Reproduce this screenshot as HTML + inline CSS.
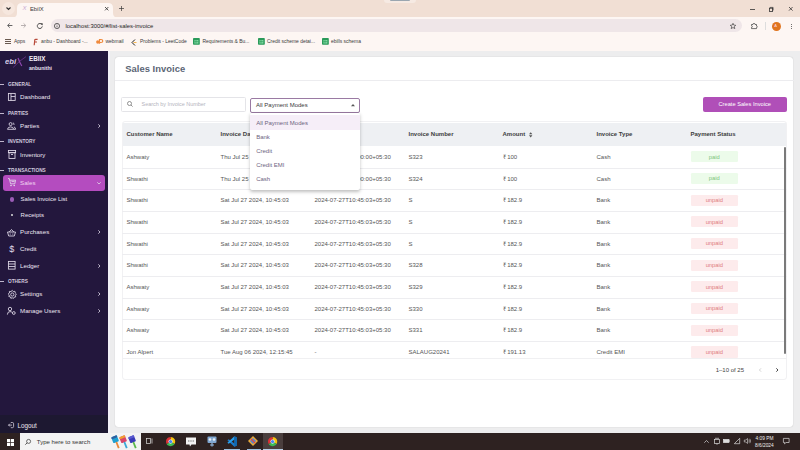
<!DOCTYPE html>
<html><head><meta charset="utf-8"><style>
*{box-sizing:border-box;margin:0;padding:0}
html,body{width:800px;height:450px;overflow:hidden;font-family:"Liberation Sans",sans-serif;background:#fff;position:relative}
.abs{position:absolute}
.t{position:absolute;white-space:nowrap}
svg{position:absolute;overflow:visible}
</style></head><body>
<div class="abs" style="left:0px;top:0px;width:800px;height:17px;background:#f1dfd4"></div>
<svg style="left:12px;top:2.5px" width="110" height="14.5" viewBox="0 0 110 14.5"><path d="M0 14.5 Q5 14.5 5 10 L5 5 Q5 0 10 0 L96 0 Q101 0 101 5 L101 10 Q101 14.5 106 14.5 Z" fill="#fdf6f3"/></svg>
<div class="abs" style="left:2px;top:2px;width:13px;height:13px;background:#f6e7de;border-radius:50%"></div>
<svg style="left:5.5px;top:6.5px" width="5" height="3" viewBox="0 0 5 3"><path d="M0.5 0.5 L2.5 2.5 L4.5 0.5" stroke="#333" stroke-width="1.1" fill="none"/></svg>
<div class="t" style="left:22.5px;top:3.30px;height:10px;line-height:10px;font-size:6px;color:#c8a8d0;font-weight:normal;"><i>X</i></div>
<div class="t" style="left:30px;top:3.50px;height:10px;line-height:10px;font-size:5.8px;color:#3a3a3a;font-weight:normal;">EbilX</div>
<svg style="left:104.8px;top:6.6px" width="3.4" height="3.4" viewBox="0 0 3.4 3.4"><path d="M0 0 L3.4 3.4 M3.4 0 L0 3.4" stroke="#3a3a3a" stroke-width="0.85"/></svg>
<svg style="left:119px;top:6px" width="5" height="5" viewBox="0 0 5 5"><path d="M2.5 0 V5 M0 2.5 H5" stroke="#3a3a3a" stroke-width="0.7"/></svg>
<svg style="left:750px;top:8.5px" width="5" height="1" viewBox="0 0 5 1"><path d="M0 0.5 H5" stroke="#333" stroke-width="0.8"/></svg>
<svg style="left:769px;top:6.5px" width="4.5" height="4.5" viewBox="0 0 4.5 4.5"><rect x="0.4" y="1.2" width="3.2" height="3.2" stroke="#333" stroke-width="0.8" fill="none"/><path d="M1.2 1.2 V0.4 H4.1 V3.3 H3.6" stroke="#333" stroke-width="0.7" fill="none"/></svg>
<svg style="left:788.8px;top:6.7px" width="3.6" height="3.6" viewBox="0 0 3.6 3.6"><path d="M0 0 L3.6 3.6 M3.6 0 L0 3.6" stroke="#333" stroke-width="0.8"/></svg>
<div class="abs" style="left:0px;top:17px;width:800px;height:18px;background:#fdf6f3"></div>
<div class="abs" style="left:50.5px;top:19.3px;width:691px;height:13.2px;background:#efe6e8;border-radius:6.6px"></div>
<svg style="left:7px;top:23.3px" width="5.4" height="5" viewBox="0 0 5.4 5"><path d="M5.4 2.5 H0.8 M2.8 0.4 L0.6 2.5 L2.8 4.6" stroke="#555" stroke-width="0.9" fill="none"/></svg>
<svg style="left:21.2px;top:23.3px" width="5.4" height="5" viewBox="0 0 5.4 5"><path d="M0 2.5 H4.6 M2.6 0.4 L4.8 2.5 L2.6 4.6" stroke="#b0a8a8" stroke-width="0.9" fill="none"/></svg>
<svg style="left:36.5px;top:23px" width="6" height="6" viewBox="0 0 6 6"><path d="M4.9 1.6 A2.5 2.5 0 1 0 5.3 3.4" stroke="#444" stroke-width="0.95" fill="none"/><path d="M3.3 0.2 L5.7 0.2 L5.7 2.6 Z" fill="#444"/></svg>
<svg style="left:54px;top:23px" width="6" height="6" viewBox="0 0 6 6"><circle cx="3" cy="3" r="2.6" stroke="#444" stroke-width="0.8" fill="none"/><path d="M3 2.5 V4.3" stroke="#444" stroke-width="0.7"/><circle cx="3" cy="1.6" r="0.35" fill="#444"/></svg>
<div class="t" style="left:65.5px;top:21.20px;height:10px;line-height:10px;font-size:5.9px;color:#1f1f1f;font-weight:normal;">localhost:3000/#/list-sales-invoice</div>
<svg style="left:729.5px;top:23px" width="6" height="6" viewBox="0 0 6 6"><path d="M3 0.3 L3.8 2.1 L5.8 2.3 L4.3 3.6 L4.8 5.6 L3 4.5 L1.2 5.6 L1.7 3.6 L0.2 2.3 L2.2 2.1 Z" stroke="#444" stroke-width="0.7" fill="none" stroke-linejoin="round"/></svg>
<svg style="left:750.5px;top:23px" width="6.5" height="6" viewBox="0 0 6.5 6"><path d="M0.5 1.5 H2 Q2 0.3 3 0.3 Q4 0.3 4 1.5 H5.5 V3 Q6.3 3 6.3 3.8 Q6.3 4.6 5.5 4.6 V5.6 H0.5 V4.5 Q1.3 4.5 1.3 3.6 Q1.3 2.7 0.5 2.7 Z" stroke="#444" stroke-width="0.75" fill="none"/></svg>
<div class="abs" style="left:764.5px;top:22px;width:0.6px;height:8px;background:#ddd"></div>
<div class="abs" style="left:771.5px;top:21.5px;width:9px;height:9px;background:#e0741e;border-radius:50%"></div>
<div class="t" style="left:774.3px;top:21.00px;height:10px;line-height:10px;font-size:4px;color:#fde;font-weight:normal;">A</div>
<div class="abs" style="left:790.5px;top:23.5px;width:1.2px;height:1.2px;background:#444;border-radius:50%"></div>
<div class="abs" style="left:790.5px;top:25.8px;width:1.2px;height:1.2px;background:#444;border-radius:50%"></div>
<div class="abs" style="left:790.5px;top:28.1px;width:1.2px;height:1.2px;background:#444;border-radius:50%"></div>
<div class="abs" style="left:0px;top:35px;width:800px;height:16px;background:#fdf6f3"></div>
<div class="abs" style="left:0px;top:50.5px;width:800px;height:0.8px;background:#e8dcd8"></div>
<div class="abs" style="left:5.0px;top:38.8px;width:1.6px;height:1.3px;background:#6a5a50"></div>
<div class="abs" style="left:5.0px;top:40.9px;width:1.6px;height:1.3px;background:#6a5a50"></div>
<div class="abs" style="left:5.0px;top:43.0px;width:1.6px;height:1.3px;background:#6a5a50"></div>
<div class="abs" style="left:7.2px;top:38.8px;width:1.6px;height:1.3px;background:#6a5a50"></div>
<div class="abs" style="left:7.2px;top:40.9px;width:1.6px;height:1.3px;background:#6a5a50"></div>
<div class="abs" style="left:7.2px;top:43.0px;width:1.6px;height:1.3px;background:#6a5a50"></div>
<div class="abs" style="left:9.4px;top:38.8px;width:1.6px;height:1.3px;background:#6a5a50"></div>
<div class="abs" style="left:9.4px;top:40.9px;width:1.6px;height:1.3px;background:#6a5a50"></div>
<div class="abs" style="left:9.4px;top:43.0px;width:1.6px;height:1.3px;background:#6a5a50"></div>
<div class="t" style="left:14px;top:37.40px;height:10px;line-height:10px;font-size:4.95px;color:#3a3a3a;font-weight:normal;">Apps</div>
<svg style="left:33px;top:38.5px" width="5" height="6.5" viewBox="0 0 5 6.5"><path d="M1.2 6.3 L1.8 0.8 Q2 0.3 2.6 0.3 H4.6 M1.5 3 H4" stroke="#b84a3a" stroke-width="1.2" fill="none"/></svg>
<div class="t" style="left:41px;top:37.40px;height:10px;line-height:10px;font-size:4.95px;color:#3a3a3a;font-weight:normal;">anbu - Dashboard -...</div>
<svg style="left:96px;top:39.3px" width="7" height="5" viewBox="0 0 7 5"><circle cx="1.8" cy="3" r="1.7" fill="#f08a3c"/><path d="M3.5 4.8 V0.5 H5 Q6.8 0.5 6.8 2 Q6.8 3.5 5 3.5 H3.5" stroke="#f08a3c" stroke-width="1.2" fill="none"/></svg>
<div class="t" style="left:105.5px;top:37.40px;height:10px;line-height:10px;font-size:4.95px;color:#3a3a3a;font-weight:normal;">webmail</div>
<svg style="left:131px;top:38.5px" width="6" height="7" viewBox="0 0 6 7"><path d="M4 0.5 L1 3.5 L4 6.5" stroke="#222" stroke-width="1" fill="none"/><path d="M2.5 3.5 H5.5" stroke="#f5a623" stroke-width="0.8"/></svg>
<div class="t" style="left:140px;top:37.40px;height:10px;line-height:10px;font-size:4.95px;color:#3a3a3a;font-weight:normal;">Problems - LeetCode</div>
<svg style="left:193px;top:38.2px" width="6.8" height="6.8" viewBox="0 0 6.8 6.8"><rect x="0" y="0" width="6.8" height="6.8" rx="0.8" fill="#2a9a5a"/><rect x="1.4" y="2" width="4" height="3.6" fill="#7fd8a0"/><path d="M1.4 3.6 H5.4 M3 2 V5.6" stroke="#2a9a5a" stroke-width="0.6"/></svg>
<svg style="left:257.5px;top:38.2px" width="6.8" height="6.8" viewBox="0 0 6.8 6.8"><rect x="0" y="0" width="6.8" height="6.8" rx="0.8" fill="#2a9a5a"/><rect x="1.4" y="2" width="4" height="3.6" fill="#7fd8a0"/><path d="M1.4 3.6 H5.4 M3 2 V5.6" stroke="#2a9a5a" stroke-width="0.6"/></svg>
<svg style="left:321.5px;top:38.2px" width="6.8" height="6.8" viewBox="0 0 6.8 6.8"><rect x="0" y="0" width="6.8" height="6.8" rx="0.8" fill="#2a9a5a"/><rect x="1.4" y="2" width="4" height="3.6" fill="#7fd8a0"/><path d="M1.4 3.6 H5.4 M3 2 V5.6" stroke="#2a9a5a" stroke-width="0.6"/></svg>
<div class="t" style="left:202.5px;top:37.40px;height:10px;line-height:10px;font-size:4.95px;color:#3a3a3a;font-weight:normal;">Requirements &amp; Bu...</div>
<div class="t" style="left:267px;top:37.40px;height:10px;line-height:10px;font-size:4.95px;color:#3a3a3a;font-weight:normal;">Credit scheme detai...</div>
<div class="t" style="left:331px;top:37.40px;height:10px;line-height:10px;font-size:4.95px;color:#3a3a3a;font-weight:normal;">ebills schema</div>
<div class="abs" style="left:384px;top:0px;width:32px;height:3.2px;background:rgba(255,255,255,0.35);border-radius:0 0 6px 6px"></div>
<div class="abs" style="left:390.3px;top:0px;width:19.5px;height:1.1px;background:#9aa6b0;border-radius:0 0 1px 1px"></div>
<div class="abs" style="left:0px;top:51.3px;width:108px;height:381.7px;background:#23173d"></div>
<div class="abs" style="left:0px;top:415px;width:108px;height:18px;background:#1d1831"></div>
<div class="abs" style="left:108px;top:51.3px;width:692px;height:381.7px;background:#ededee"></div>
<div class="abs" style="left:108px;top:51.3px;width:1.6px;height:381.7px;background:#f3f1f8"></div>
<div class="abs" style="left:114.7px;top:56.8px;width:678.8px;height:370px;background:#fff;border-radius:3px;box-shadow:0 0 1px rgba(0,0,0,0.28)"></div>
<div class="t" style="left:29px;top:53.60px;height:10px;line-height:10px;font-size:6.3px;color:#f4eef8;font-weight:bold;">EBIIX</div>
<div class="t" style="left:29px;top:62.80px;height:10px;line-height:10px;font-size:5.1px;color:#e8e0f0;font-weight:bold;">anbunithi</div>
<div class="t" style="left:4.6px;top:57.40px;height:10px;line-height:10px;font-size:7px;color:#d6cce8;font-weight:bold;transform:scaleX(1.1);transform-origin:0 50%"><i>ebi</i></div>
<svg style="left:0px;top:0px" width="30" height="70" viewBox="0 0 30 70"><path d="M18 58 Q19.5 62 21.8 66" stroke="#8e48b0" stroke-width="1.2" fill="none"/><path d="M26 56.6 Q19 61 13.2 67.4" stroke="#7a3a9c" stroke-width="0.7" fill="none"/></svg>
<div class="abs" style="left:0px;top:84.1px;width:3.6px;height:0.8px;background:#bfb6cc"></div>
<div class="t" style="left:8px;top:80.10px;height:10px;line-height:10px;font-size:4.75px;color:#d2cade;font-weight:bold;">GENERAL</div>
<div class="abs" style="left:0px;top:113.0px;width:3.6px;height:0.8px;background:#bfb6cc"></div>
<div class="t" style="left:8px;top:109.00px;height:10px;line-height:10px;font-size:4.75px;color:#d2cade;font-weight:bold;">PARTIES</div>
<div class="abs" style="left:0px;top:141.0px;width:3.6px;height:0.8px;background:#bfb6cc"></div>
<div class="t" style="left:8px;top:137.00px;height:10px;line-height:10px;font-size:4.75px;color:#d2cade;font-weight:bold;">INVENTORY</div>
<div class="abs" style="left:0px;top:169.6px;width:3.6px;height:0.8px;background:#bfb6cc"></div>
<div class="t" style="left:8px;top:165.60px;height:10px;line-height:10px;font-size:4.75px;color:#d2cade;font-weight:bold;">TRANSACTIONS</div>
<div class="abs" style="left:0px;top:280.6px;width:3.6px;height:0.8px;background:#bfb6cc"></div>
<div class="t" style="left:8px;top:276.60px;height:10px;line-height:10px;font-size:4.75px;color:#d2cade;font-weight:bold;">OTHERS</div>
<div class="abs" style="left:3px;top:174.5px;width:102px;height:16px;background:#b44cbf;border-radius:3px"></div>
<svg style="left:8px;top:93.2px" width="7.6" height="7.8" viewBox="0 0 7.6 7.8"><rect x="0.4" y="0.4" width="6.8" height="7" stroke="#e2dcea" stroke-width="0.85" fill="none"/><path d="M3 0.4 V7.4 M3 3.5 H7.2" stroke="#e2dcea" stroke-width="0.85" fill="none"/></svg>
<svg style="left:7px;top:121.8px" width="9" height="7.8" viewBox="0 0 9 7.8"><circle cx="3.6" cy="2.1" r="1.5" stroke="#e2dcea" stroke-width="0.85" fill="none"/><path d="M0.5 7.3 Q0.8 4.9 3.6 4.9 Q6.4 4.9 6.7 7.3 Z" stroke="#e2dcea" stroke-width="0.85" fill="none"/><path d="M5.9 0.7 Q7.3 1.2 7 2.9 M6.9 4.9 Q8.5 5.2 8.6 7.3 H6.7" stroke="#e2dcea" stroke-width="0.85" fill="none"/></svg>
<svg style="left:7.5px;top:150px" width="8" height="9" viewBox="0 0 8 9"><rect x="0.4" y="0.5" width="7.2" height="2.2" stroke="#e2dcea" stroke-width="0.85" fill="none"/><rect x="1" y="2.7" width="6" height="5.8" stroke="#e2dcea" stroke-width="0.85" fill="none"/><path d="M3 4.5 H5" stroke="#e2dcea" stroke-width="0.85" fill="none"/></svg>
<svg style="left:8px;top:178px" width="8" height="9" viewBox="0 0 8 9"><path d="M0 0.6 H1.3 L2.6 5.8 H6.8 L7.6 2.2 H2" stroke="#e2dcea" stroke-width="0.85" fill="none"/><circle cx="3" cy="7.5" r="0.8" fill="#e2dcea"/><circle cx="6.2" cy="7.5" r="0.8" fill="#e2dcea"/><path d="M3.5 3.6 H6.6" stroke="#e2dcea" stroke-width="0.85" fill="none"/></svg>
<svg style="left:7px;top:228.5px" width="9" height="7.5" viewBox="0 0 9 7.5"><path d="M0.5 3 H8.5 L7.3 7 H1.7 Z" stroke="#e2dcea" stroke-width="0.85" fill="none"/><path d="M2.2 3 L4.5 0.5 L6.8 3" stroke="#e2dcea" stroke-width="0.85" fill="none"/><path d="M3.2 4.5 V5.6 M5.8 4.5 V5.6" stroke="#e2dcea" stroke-width="0.85" fill="none"/></svg>
<div class="t" style="left:9.2px;top:243.60px;height:10px;line-height:10px;font-size:9px;color:#e2dcea;font-weight:normal;">$</div>
<svg style="left:8px;top:261px" width="7.5" height="8.5" viewBox="0 0 7.5 8.5"><rect x="0.4" y="0.4" width="6.7" height="7.7" stroke="#e2dcea" stroke-width="0.85" fill="none"/><path d="M0.4 3 H7.1 M0.4 5.5 H7.1" stroke="#e2dcea" stroke-width="0.85" fill="none"/></svg>
<svg style="left:7.5px;top:290px" width="8.6" height="9" viewBox="0 0 8.6 9"><path d="M4.3 0.4 L5.3 1.6 L6.9 1.3 L7.2 2.9 L8.4 4 L7.4 5.3 L7.7 6.9 L6.1 7.2 L5.2 8.6 L4.3 7.6 L2.9 8.4 L2.4 6.9 L0.8 6.5 L1.3 5 L0.2 3.9 L1.5 3 L1.4 1.4 L3 1.6 Z" stroke="#e2dcea" stroke-width="0.85" fill="none" stroke-linejoin="round"/><circle cx="4.3" cy="4.5" r="1.6" stroke="#e2dcea" stroke-width="0.85" fill="none"/></svg>
<svg style="left:7px;top:307px" width="9" height="8" viewBox="0 0 9 8"><circle cx="3" cy="2" r="1.7" stroke="#e2dcea" stroke-width="0.85" fill="none"/><path d="M0.4 7.6 Q0.4 4.6 3 4.6 Q4.4 4.6 5 5.4" stroke="#e2dcea" stroke-width="0.85" fill="none"/><circle cx="6.8" cy="6" r="1.4" stroke="#e2dcea" stroke-width="0.85" fill="none"/></svg>
<div class="t" style="left:20px;top:92.00px;height:10px;line-height:10px;font-size:6.2px;color:#ece6f2;font-weight:normal;">Dashboard</div>
<div class="t" style="left:20px;top:121.40px;height:10px;line-height:10px;font-size:6.2px;color:#ece6f2;font-weight:normal;">Parties</div>
<svg style="left:98px;top:124.4px" width="2.4" height="4" viewBox="0 0 2.4 4"><path d="M0.3 0.3 L2 2 L0.3 3.7" stroke="#e2dcea" stroke-width="0.8" fill="none"/></svg>
<div class="t" style="left:20px;top:149.60px;height:10px;line-height:10px;font-size:6.2px;color:#ece6f2;font-weight:normal;">Inventory</div>
<div class="t" style="left:20px;top:177.80px;height:10px;line-height:10px;font-size:6.2px;color:#f0d6f2;font-weight:normal;">Sales</div>
<div class="t" style="left:20px;top:226.80px;height:10px;line-height:10px;font-size:6.2px;color:#ece6f2;font-weight:normal;">Purchases</div>
<svg style="left:98px;top:229.8px" width="2.4" height="4" viewBox="0 0 2.4 4"><path d="M0.3 0.3 L2 2 L0.3 3.7" stroke="#e2dcea" stroke-width="0.8" fill="none"/></svg>
<div class="t" style="left:20px;top:243.80px;height:10px;line-height:10px;font-size:6.2px;color:#ece6f2;font-weight:normal;">Credit</div>
<div class="t" style="left:20px;top:260.60px;height:10px;line-height:10px;font-size:6.2px;color:#ece6f2;font-weight:normal;">Ledger</div>
<svg style="left:98px;top:263.6px" width="2.4" height="4" viewBox="0 0 2.4 4"><path d="M0.3 0.3 L2 2 L0.3 3.7" stroke="#e2dcea" stroke-width="0.8" fill="none"/></svg>
<div class="t" style="left:20px;top:289.40px;height:10px;line-height:10px;font-size:6.2px;color:#ece6f2;font-weight:normal;">Settings</div>
<svg style="left:98px;top:292.4px" width="2.4" height="4" viewBox="0 0 2.4 4"><path d="M0.3 0.3 L2 2 L0.3 3.7" stroke="#e2dcea" stroke-width="0.8" fill="none"/></svg>
<div class="t" style="left:20px;top:306.00px;height:10px;line-height:10px;font-size:6.2px;color:#ece6f2;font-weight:normal;">Manage Users</div>
<svg style="left:98px;top:309px" width="2.4" height="4" viewBox="0 0 2.4 4"><path d="M0.3 0.3 L2 2 L0.3 3.7" stroke="#e2dcea" stroke-width="0.8" fill="none"/></svg>
<svg style="left:97.3px;top:182px" width="4" height="2.4" viewBox="0 0 4 2.4"><path d="M0.3 0.3 L2 2 L3.7 0.3" stroke="#e2dcea" stroke-width="0.8" fill="none"/></svg>
<div class="abs" style="left:9.8px;top:197.2px;width:4.6px;height:4.6px;background:#9a5cb6;border-radius:50%"></div>
<div class="t" style="left:20.6px;top:194.40px;height:10px;line-height:10px;font-size:6px;color:#ece6f2;font-weight:normal;">Sales Invoice List</div>
<div class="abs" style="left:11.2px;top:214px;width:2.2px;height:2.2px;background:#ddd;border-radius:50%"></div>
<div class="t" style="left:20.6px;top:210.00px;height:10px;line-height:10px;font-size:6px;color:#ece6f2;font-weight:normal;">Receipts</div>
<svg style="left:8px;top:422.3px" width="6" height="6.2" viewBox="0 0 6 6.2"><path d="M2.8 0.5 H4.4 Q5.6 0.5 5.6 1.7 V4.5 Q5.6 5.7 4.4 5.7 H2.8" stroke="#e2dcea" stroke-width="0.75" fill="none"/><path d="M4 3.1 H0.5 M1.9 1.7 L0.5 3.1 L1.9 4.5" stroke="#e2dcea" stroke-width="0.75" fill="none"/></svg>
<div class="t" style="left:17.5px;top:421.20px;height:10px;line-height:10px;font-size:6.3px;color:#ece6f2;font-weight:normal;">Logout</div>
<div class="t" style="left:125.2px;top:64.00px;height:10px;line-height:10px;font-size:9.4px;color:#5b6575;font-weight:bold;letter-spacing:0.05px">Sales Invoice</div>
<div class="abs" style="left:115px;top:80px;width:678.5px;height:1px;background:#ececef"></div>
<div class="abs" style="left:121.1px;top:97px;width:125.4px;height:14.6px;border:1px solid #e4e4e8;border-radius:1.5px;background:#fff"></div>
<svg style="left:126.8px;top:101px" width="6" height="6" viewBox="0 0 6 6"><circle cx="2.5" cy="2.5" r="2" stroke="#777" stroke-width="0.8" fill="none"/><path d="M4 4 L5.6 5.6" stroke="#777" stroke-width="0.8"/></svg>
<div class="t" style="left:141.6px;top:98.60px;height:10px;line-height:10px;font-size:5.45px;color:#b4b4bc;font-weight:normal;">Search by Invoice Number</div>
<div class="abs" style="left:249.8px;top:97.5px;width:110.5px;height:15px;border:1px solid #9a7aa3;border-radius:2px;background:#fff"></div>
<div class="t" style="left:256px;top:100.20px;height:10px;line-height:10px;font-size:6px;color:#3a3a3a;font-weight:normal;">All Payment Modes</div>
<svg style="left:350.5px;top:103.8px" width="4" height="2.2" viewBox="0 0 4 2.2"><path d="M0 2.2 L2 0 L4 2.2 Z" fill="#555"/></svg>
<div class="abs" style="left:703px;top:97px;width:83.5px;height:14.5px;background:#b04fb8;border-radius:2px"></div>
<div class="t" style="left:718.5px;top:99.30px;height:10px;line-height:10px;font-size:5.7px;color:#fff;font-weight:normal;">Create Sales Invoice</div>
<div class="abs" style="left:121.5px;top:120.5px;width:665.5px;height:259.5px;border:1px solid #f1f1f3;border-radius:3px"></div>
<div class="abs" style="left:122.5px;top:122.6px;width:663.5px;height:23.8px;background:#eef0f3"></div>
<div class="t" style="left:126.5px;top:129.20px;height:10px;line-height:10px;font-size:6px;color:#3d3d3d;font-weight:bold;">Customer Name</div>
<div class="t" style="left:220.5px;top:129.20px;height:10px;line-height:10px;font-size:6px;color:#3d3d3d;font-weight:bold;">Invoice Date</div>
<div class="t" style="left:314.5px;top:129.20px;height:10px;line-height:10px;font-size:6px;color:#3d3d3d;font-weight:bold;">Due Date</div>
<div class="t" style="left:408.5px;top:129.20px;height:10px;line-height:10px;font-size:6px;color:#3d3d3d;font-weight:bold;">Invoice Number</div>
<div class="t" style="left:502.5px;top:129.20px;height:10px;line-height:10px;font-size:6px;color:#3d3d3d;font-weight:bold;">Amount</div>
<div class="t" style="left:596.5px;top:129.20px;height:10px;line-height:10px;font-size:6px;color:#3d3d3d;font-weight:bold;">Invoice Type</div>
<div class="t" style="left:690.5px;top:129.20px;height:10px;line-height:10px;font-size:6px;color:#3d3d3d;font-weight:bold;">Payment Status</div>
<svg style="left:528.6px;top:131.6px" width="3.4" height="5.6" viewBox="0 0 3.4 5.6"><path d="M0 2.3 L1.7 0.2 L3.4 2.3 Z M0 3.3 L1.7 5.4 L3.4 3.3 Z" fill="#555"/></svg>
<div class="t" style="left:126.5px;top:151.90px;height:10px;line-height:10px;font-size:6px;color:#555;font-weight:normal;">Ashwaty</div>
<div class="t" style="left:220.5px;top:151.90px;height:10px;line-height:10px;font-size:6px;color:#555;font-weight:normal;">Thu Jul 25 2024, 10:00:00</div>
<div class="t" style="left:314.5px;top:151.90px;height:10px;line-height:10px;font-size:6px;color:#555;font-weight:normal;">2024-07-25T10:00:00+05:30</div>
<div class="t" style="left:408.5px;top:151.90px;height:10px;line-height:10px;font-size:6px;color:#555;font-weight:normal;">S323</div>
<div class="t" style="left:502.5px;top:151.90px;height:10px;line-height:10px;font-size:6px;color:#555;font-weight:normal;">&#x20B9; 100</div>
<div class="t" style="left:596.5px;top:151.90px;height:10px;line-height:10px;font-size:6px;color:#555;font-weight:normal;">Cash</div>
<div class="abs" style="left:690.6px;top:151.20000000000002px;width:47.5px;height:11.2px;background:#ecfbea;border-radius:1.2px"></div>
<div class="t" style="left:690.6px;top:151.50px;height:10px;line-height:10px;font-size:5.8px;color:#7cc47a;font-weight:normal;"><span style='display:inline-block;width:47.5px;text-align:center'>paid</span></div>
<div class="abs" style="left:122.0px;top:167.65px;width:664.5px;height:1px;background:#ededf0"></div>
<div class="t" style="left:126.5px;top:173.58px;height:10px;line-height:10px;font-size:6px;color:#555;font-weight:normal;">Shwathi</div>
<div class="t" style="left:220.5px;top:173.58px;height:10px;line-height:10px;font-size:6px;color:#555;font-weight:normal;">Thu Jul 25 2024, 10:00:00</div>
<div class="t" style="left:314.5px;top:173.58px;height:10px;line-height:10px;font-size:6px;color:#555;font-weight:normal;">2024-07-25T10:00:00+05:30</div>
<div class="t" style="left:408.5px;top:173.58px;height:10px;line-height:10px;font-size:6px;color:#555;font-weight:normal;">S324</div>
<div class="t" style="left:502.5px;top:173.58px;height:10px;line-height:10px;font-size:6px;color:#555;font-weight:normal;">&#x20B9; 100</div>
<div class="t" style="left:596.5px;top:173.58px;height:10px;line-height:10px;font-size:6px;color:#555;font-weight:normal;">Cash</div>
<div class="abs" style="left:690.6px;top:172.88000000000002px;width:47.5px;height:11.2px;background:#ecfbea;border-radius:1.2px"></div>
<div class="t" style="left:690.6px;top:173.18px;height:10px;line-height:10px;font-size:5.8px;color:#7cc47a;font-weight:normal;"><span style='display:inline-block;width:47.5px;text-align:center'>paid</span></div>
<div class="abs" style="left:122.0px;top:189.29999999999998px;width:664.5px;height:1px;background:#ededf0"></div>
<div class="t" style="left:126.5px;top:195.26px;height:10px;line-height:10px;font-size:6px;color:#555;font-weight:normal;">Shwathi</div>
<div class="t" style="left:220.5px;top:195.26px;height:10px;line-height:10px;font-size:6px;color:#555;font-weight:normal;">Sat Jul 27 2024, 10:45:03</div>
<div class="t" style="left:314.5px;top:195.26px;height:10px;line-height:10px;font-size:6px;color:#555;font-weight:normal;">2024-07-27T10:45:03+05:30</div>
<div class="t" style="left:408.5px;top:195.26px;height:10px;line-height:10px;font-size:6px;color:#555;font-weight:normal;">S</div>
<div class="t" style="left:502.5px;top:195.26px;height:10px;line-height:10px;font-size:6px;color:#555;font-weight:normal;">&#x20B9; 182.9</div>
<div class="t" style="left:596.5px;top:195.26px;height:10px;line-height:10px;font-size:6px;color:#555;font-weight:normal;">Bank</div>
<div class="abs" style="left:690.6px;top:194.56px;width:47.5px;height:11.2px;background:#fdebec;border-radius:1.2px"></div>
<div class="t" style="left:690.6px;top:194.86px;height:10px;line-height:10px;font-size:5.8px;color:#e07c7c;font-weight:normal;"><span style='display:inline-block;width:47.5px;text-align:center'>unpaid</span></div>
<div class="abs" style="left:122.0px;top:210.95px;width:664.5px;height:1px;background:#ededf0"></div>
<div class="t" style="left:126.5px;top:216.94px;height:10px;line-height:10px;font-size:6px;color:#555;font-weight:normal;">Shwathi</div>
<div class="t" style="left:220.5px;top:216.94px;height:10px;line-height:10px;font-size:6px;color:#555;font-weight:normal;">Sat Jul 27 2024, 10:45:03</div>
<div class="t" style="left:314.5px;top:216.94px;height:10px;line-height:10px;font-size:6px;color:#555;font-weight:normal;">2024-07-27T10:45:03+05:30</div>
<div class="t" style="left:408.5px;top:216.94px;height:10px;line-height:10px;font-size:6px;color:#555;font-weight:normal;">S</div>
<div class="t" style="left:502.5px;top:216.94px;height:10px;line-height:10px;font-size:6px;color:#555;font-weight:normal;">&#x20B9; 182.9</div>
<div class="t" style="left:596.5px;top:216.94px;height:10px;line-height:10px;font-size:6px;color:#555;font-weight:normal;">Bank</div>
<div class="abs" style="left:690.6px;top:216.24px;width:47.5px;height:11.2px;background:#fdebec;border-radius:1.2px"></div>
<div class="t" style="left:690.6px;top:216.54px;height:10px;line-height:10px;font-size:5.8px;color:#e07c7c;font-weight:normal;"><span style='display:inline-block;width:47.5px;text-align:center'>unpaid</span></div>
<div class="abs" style="left:122.0px;top:232.6px;width:664.5px;height:1px;background:#ededf0"></div>
<div class="t" style="left:126.5px;top:238.62px;height:10px;line-height:10px;font-size:6px;color:#555;font-weight:normal;">Shwathi</div>
<div class="t" style="left:220.5px;top:238.62px;height:10px;line-height:10px;font-size:6px;color:#555;font-weight:normal;">Sat Jul 27 2024, 10:45:03</div>
<div class="t" style="left:314.5px;top:238.62px;height:10px;line-height:10px;font-size:6px;color:#555;font-weight:normal;">2024-07-27T10:45:03+05:30</div>
<div class="t" style="left:408.5px;top:238.62px;height:10px;line-height:10px;font-size:6px;color:#555;font-weight:normal;">S</div>
<div class="t" style="left:502.5px;top:238.62px;height:10px;line-height:10px;font-size:6px;color:#555;font-weight:normal;">&#x20B9; 182.9</div>
<div class="t" style="left:596.5px;top:238.62px;height:10px;line-height:10px;font-size:6px;color:#555;font-weight:normal;">Bank</div>
<div class="abs" style="left:690.6px;top:237.92000000000002px;width:47.5px;height:11.2px;background:#fdebec;border-radius:1.2px"></div>
<div class="t" style="left:690.6px;top:238.22px;height:10px;line-height:10px;font-size:5.8px;color:#e07c7c;font-weight:normal;"><span style='display:inline-block;width:47.5px;text-align:center'>unpaid</span></div>
<div class="abs" style="left:122.0px;top:254.25px;width:664.5px;height:1px;background:#ededf0"></div>
<div class="t" style="left:126.5px;top:260.30px;height:10px;line-height:10px;font-size:6px;color:#555;font-weight:normal;">Shwathi</div>
<div class="t" style="left:220.5px;top:260.30px;height:10px;line-height:10px;font-size:6px;color:#555;font-weight:normal;">Sat Jul 27 2024, 10:45:03</div>
<div class="t" style="left:314.5px;top:260.30px;height:10px;line-height:10px;font-size:6px;color:#555;font-weight:normal;">2024-07-27T10:45:03+05:30</div>
<div class="t" style="left:408.5px;top:260.30px;height:10px;line-height:10px;font-size:6px;color:#555;font-weight:normal;">S328</div>
<div class="t" style="left:502.5px;top:260.30px;height:10px;line-height:10px;font-size:6px;color:#555;font-weight:normal;">&#x20B9; 182.9</div>
<div class="t" style="left:596.5px;top:260.30px;height:10px;line-height:10px;font-size:6px;color:#555;font-weight:normal;">Bank</div>
<div class="abs" style="left:690.6px;top:259.6px;width:47.5px;height:11.2px;background:#fdebec;border-radius:1.2px"></div>
<div class="t" style="left:690.6px;top:259.90px;height:10px;line-height:10px;font-size:5.8px;color:#e07c7c;font-weight:normal;"><span style='display:inline-block;width:47.5px;text-align:center'>unpaid</span></div>
<div class="abs" style="left:122.0px;top:275.9px;width:664.5px;height:1px;background:#ededf0"></div>
<div class="t" style="left:126.5px;top:281.98px;height:10px;line-height:10px;font-size:6px;color:#555;font-weight:normal;">Ashwaty</div>
<div class="t" style="left:220.5px;top:281.98px;height:10px;line-height:10px;font-size:6px;color:#555;font-weight:normal;">Sat Jul 27 2024, 10:45:03</div>
<div class="t" style="left:314.5px;top:281.98px;height:10px;line-height:10px;font-size:6px;color:#555;font-weight:normal;">2024-07-27T10:45:03+05:30</div>
<div class="t" style="left:408.5px;top:281.98px;height:10px;line-height:10px;font-size:6px;color:#555;font-weight:normal;">S329</div>
<div class="t" style="left:502.5px;top:281.98px;height:10px;line-height:10px;font-size:6px;color:#555;font-weight:normal;">&#x20B9; 182.9</div>
<div class="t" style="left:596.5px;top:281.98px;height:10px;line-height:10px;font-size:6px;color:#555;font-weight:normal;">Bank</div>
<div class="abs" style="left:690.6px;top:281.28000000000003px;width:47.5px;height:11.2px;background:#fdebec;border-radius:1.2px"></div>
<div class="t" style="left:690.6px;top:281.58px;height:10px;line-height:10px;font-size:5.8px;color:#e07c7c;font-weight:normal;"><span style='display:inline-block;width:47.5px;text-align:center'>unpaid</span></div>
<div class="abs" style="left:122.0px;top:297.55px;width:664.5px;height:1px;background:#ededf0"></div>
<div class="t" style="left:126.5px;top:303.66px;height:10px;line-height:10px;font-size:6px;color:#555;font-weight:normal;">Ashwaty</div>
<div class="t" style="left:220.5px;top:303.66px;height:10px;line-height:10px;font-size:6px;color:#555;font-weight:normal;">Sat Jul 27 2024, 10:45:03</div>
<div class="t" style="left:314.5px;top:303.66px;height:10px;line-height:10px;font-size:6px;color:#555;font-weight:normal;">2024-07-27T10:45:03+05:30</div>
<div class="t" style="left:408.5px;top:303.66px;height:10px;line-height:10px;font-size:6px;color:#555;font-weight:normal;">S330</div>
<div class="t" style="left:502.5px;top:303.66px;height:10px;line-height:10px;font-size:6px;color:#555;font-weight:normal;">&#x20B9; 182.9</div>
<div class="t" style="left:596.5px;top:303.66px;height:10px;line-height:10px;font-size:6px;color:#555;font-weight:normal;">Bank</div>
<div class="abs" style="left:690.6px;top:302.96px;width:47.5px;height:11.2px;background:#fdebec;border-radius:1.2px"></div>
<div class="t" style="left:690.6px;top:303.26px;height:10px;line-height:10px;font-size:5.8px;color:#e07c7c;font-weight:normal;"><span style='display:inline-block;width:47.5px;text-align:center'>unpaid</span></div>
<div class="abs" style="left:122.0px;top:319.20000000000005px;width:664.5px;height:1px;background:#ededf0"></div>
<div class="t" style="left:126.5px;top:325.34px;height:10px;line-height:10px;font-size:6px;color:#555;font-weight:normal;">Ashwaty</div>
<div class="t" style="left:220.5px;top:325.34px;height:10px;line-height:10px;font-size:6px;color:#555;font-weight:normal;">Sat Jul 27 2024, 10:45:03</div>
<div class="t" style="left:314.5px;top:325.34px;height:10px;line-height:10px;font-size:6px;color:#555;font-weight:normal;">2024-07-27T10:45:03+05:30</div>
<div class="t" style="left:408.5px;top:325.34px;height:10px;line-height:10px;font-size:6px;color:#555;font-weight:normal;">S331</div>
<div class="t" style="left:502.5px;top:325.34px;height:10px;line-height:10px;font-size:6px;color:#555;font-weight:normal;">&#x20B9; 182.9</div>
<div class="t" style="left:596.5px;top:325.34px;height:10px;line-height:10px;font-size:6px;color:#555;font-weight:normal;">Bank</div>
<div class="abs" style="left:690.6px;top:324.64000000000004px;width:47.5px;height:11.2px;background:#fdebec;border-radius:1.2px"></div>
<div class="t" style="left:690.6px;top:324.94px;height:10px;line-height:10px;font-size:5.8px;color:#e07c7c;font-weight:normal;"><span style='display:inline-block;width:47.5px;text-align:center'>unpaid</span></div>
<div class="abs" style="left:122.0px;top:340.85px;width:664.5px;height:1px;background:#ededf0"></div>
<div class="t" style="left:126.5px;top:347.02px;height:10px;line-height:10px;font-size:6px;color:#555;font-weight:normal;">Jon Alpert</div>
<div class="t" style="left:220.5px;top:347.02px;height:10px;line-height:10px;font-size:6px;color:#555;font-weight:normal;">Tue Aug 06 2024, 12:15:45</div>
<div class="t" style="left:314.5px;top:347.02px;height:10px;line-height:10px;font-size:6px;color:#555;font-weight:normal;">-</div>
<div class="t" style="left:408.5px;top:347.02px;height:10px;line-height:10px;font-size:6px;color:#555;font-weight:normal;">SALAUG20241</div>
<div class="t" style="left:502.5px;top:347.02px;height:10px;line-height:10px;font-size:6px;color:#555;font-weight:normal;">&#x20B9; 191.13</div>
<div class="t" style="left:596.5px;top:347.02px;height:10px;line-height:10px;font-size:6px;color:#555;font-weight:normal;">Credit EMI</div>
<div class="abs" style="left:690.6px;top:346.32px;width:47.5px;height:11.2px;background:#fdebec;border-radius:1.2px"></div>
<div class="t" style="left:690.6px;top:346.62px;height:10px;line-height:10px;font-size:5.8px;color:#e07c7c;font-weight:normal;"><span style='display:inline-block;width:47.5px;text-align:center'>unpaid</span></div>
<div class="abs" style="left:122.0px;top:357.8px;width:664.5px;height:1px;background:#f0f0f2"></div>
<div class="abs" style="left:784px;top:146.5px;width:2px;height:207px;background:#7a7a7a;border-radius:1px"></div>
<div class="t" style="left:715.7px;top:364.50px;height:10px;line-height:10px;font-size:6px;color:#444;font-weight:normal;">1&#x2013;10 of 25</div>
<svg style="left:759px;top:367.5px" width="2.4" height="4" viewBox="0 0 2.4 4"><path d="M2.1 0.3 L0.4 2 L2.1 3.7" stroke="#c8c8c8" stroke-width="0.8" fill="none"/></svg>
<svg style="left:776.2px;top:367.5px" width="2.4" height="4" viewBox="0 0 2.4 4"><path d="M0.3 0.3 L2 2 L0.3 3.7" stroke="#333" stroke-width="0.9" fill="none"/></svg>
<div class="abs" style="left:249.5px;top:113px;width:110.7px;height:77px;background:#fff;box-shadow:0 1.5px 3.5px rgba(0,0,0,0.25);border-radius:2px"></div>
<div class="abs" style="left:249.5px;top:115.4px;width:110.7px;height:14.4px;background:#f6eef8"></div>
<div class="t" style="left:256.2px;top:117.70px;height:10px;line-height:10px;font-size:6px;color:#6e6480;font-weight:normal;">All Payment Modes</div>
<div class="t" style="left:256.2px;top:132.00px;height:10px;line-height:10px;font-size:6px;color:#6e6480;font-weight:normal;">Bank</div>
<div class="t" style="left:256.2px;top:145.90px;height:10px;line-height:10px;font-size:6px;color:#6e6480;font-weight:normal;">Credit</div>
<div class="t" style="left:256.2px;top:160.00px;height:10px;line-height:10px;font-size:6px;color:#6e6480;font-weight:normal;">Credit EMI</div>
<div class="t" style="left:256.2px;top:173.70px;height:10px;line-height:10px;font-size:6px;color:#6e6480;font-weight:normal;">Cash</div>
<div class="abs" style="left:0px;top:433px;width:800px;height:17px;background:#2e2221"></div>
<svg style="left:6.5px;top:438.8px" width="7" height="7" viewBox="0 0 7 7"><rect x="0" y="0" width="3.1" height="3.1" fill="#fff"/><rect x="3.8" y="0" width="3.2" height="3.1" fill="#fff"/><rect x="0" y="3.8" width="3.1" height="3.2" fill="#fff"/><rect x="3.8" y="3.8" width="3.2" height="3.2" fill="#fff"/></svg>
<div class="abs" style="left:20px;top:433px;width:121px;height:17px;background:#f3f3f3"></div>
<svg style="left:25px;top:438.5px" width="6" height="6" viewBox="0 0 6 6"><circle cx="3.6" cy="2.4" r="2" stroke="#333" stroke-width="0.7" fill="none"/><path d="M2.2 3.8 L0.3 5.7" stroke="#333" stroke-width="0.8"/></svg>
<div class="t" style="left:36.8px;top:437.00px;height:10px;line-height:10px;font-size:6.05px;color:#333;font-weight:normal;">Type here to search</div>
<svg style="left:110.5px;top:434.5px" width="9" height="14" viewBox="0 0 9 14"><g transform="rotate(-22 4 4)"><rect x="1" y="1" width="6" height="6.5" rx="1" fill="#1e9fd0"/><rect x="1" y="1" width="6" height="2.2" rx="1" fill="#2f5f9f"/><rect x="3.2" y="7.3" width="1.8" height="6.5" fill="#e8883a"/></g></svg>
<svg style="left:119px;top:434.5px" width="9" height="14" viewBox="0 0 9 14"><g transform="rotate(-22 4 4)"><rect x="1" y="1" width="6" height="6.5" rx="1" fill="#d9456a"/><rect x="1" y="1" width="6" height="2.2" rx="1" fill="#f0a030"/><rect x="3.2" y="7.3" width="1.8" height="6.5" fill="#3aa8d8"/></g></svg>
<svg style="left:128px;top:434.5px" width="9" height="14" viewBox="0 0 9 14"><g transform="rotate(-22 4 4)"><rect x="1" y="1" width="6" height="6.5" rx="1" fill="#3a3ab8"/><rect x="1" y="1" width="6" height="2.2" rx="1" fill="#5a5ad0"/><rect x="3.2" y="7.3" width="1.8" height="6.5" fill="#5cb84c"/></g></svg>
<svg style="left:146px;top:438px" width="7" height="6" viewBox="0 0 7 6"><rect x="0.5" y="0.5" width="4" height="5" stroke="#ddd" stroke-width="0.7" fill="none"/><path d="M6 0.5 V5.5" stroke="#ddd" stroke-width="0.7"/></svg>
<svg style="left:166.4px;top:436.9px" width="9.2" height="9.2" viewBox="-10 -10 20 20"><path d="M0 -10 A10 10 0 0 1 8.66 5 L0 0 Z" fill="#f4c20d"/><path d="M8.66 5 A10 10 0 0 1 -8.66 5 L0 0 Z" fill="#3cba54"/><path d="M-8.66 5 A10 10 0 0 1 0 -10 L0 0 Z" fill="#db3236"/><circle r="4.6" fill="#fff"/><circle r="3.6" fill="#4885ed"/></svg>
<svg style="left:186px;top:436.5px" width="10" height="10" viewBox="0 0 10 10"><path d="M0 0.5 H10 V7.5 H5.5 L4 9.5 L3.5 7.5 H0 Z" fill="#f2f2f2"/><circle cx="2.8" cy="4" r="0.7" fill="#777"/><circle cx="5" cy="4" r="0.7" fill="#777"/><circle cx="7.2" cy="4" r="0.7" fill="#777"/></svg>
<svg style="left:207px;top:436px" width="10" height="11" viewBox="0 0 10 11"><rect x="0.5" y="0.5" width="9" height="6.5" rx="1" fill="#7fa6d0"/><circle cx="3" cy="3.5" r="1.3" fill="#e8eef6"/><circle cx="7" cy="3.5" r="1.3" fill="#e8eef6"/><path d="M5 7 V10.5 M3 9 H7" stroke="#8fb4da" stroke-width="1.2"/></svg>
<svg style="left:227px;top:436px" width="10" height="11" viewBox="0 0 10 11"><path d="M7.4 0.2 L10 1.5 V9.5 L7.4 10.8 L0.4 4.2 L1.7 3.2 L7.4 7.6 Z" fill="#1b7ccc"/><path d="M7.4 0.2 V3.4 L1.7 7.8 L0.4 6.8 Z" fill="#2aa0ee"/><path d="M7.4 0.2 L10 1.5 V9.5 L7.4 10.8 Z" fill="#1168b0"/></svg>
<svg style="left:247.5px;top:436px" width="10" height="10" viewBox="0 0 10 10"><path d="M5 0 L10 5 L5 10 L0 5 Z" fill="#e8a93a"/><path d="M5 2 L8 5 L5 8 L2 5 Z" fill="#4f86d8"/><path d="M3 3 L7 7" stroke="#e84a3a" stroke-width="1.2"/></svg>
<div class="abs" style="left:263px;top:433px;width:20px;height:17px;background:#4a3e3d"></div>
<svg style="left:268.4px;top:436.9px" width="9.2" height="9.2" viewBox="-10 -10 20 20"><path d="M0 -10 A10 10 0 0 1 8.66 5 L0 0 Z" fill="#f4c20d"/><path d="M8.66 5 A10 10 0 0 1 -8.66 5 L0 0 Z" fill="#3cba54"/><path d="M-8.66 5 A10 10 0 0 1 0 -10 L0 0 Z" fill="#db3236"/><circle r="4.6" fill="#fff"/><circle r="3.6" fill="#4885ed"/></svg>
<div class="abs" style="left:224px;top:448.8px;width:16px;height:1.2px;background:#9dc0e0"></div>
<div class="abs" style="left:247px;top:448.8px;width:14px;height:1.2px;background:#9dc0e0"></div>
<div class="abs" style="left:263px;top:448.8px;width:20px;height:1.2px;background:#b8d0e8"></div>
<svg style="left:704px;top:439.5px" width="5" height="3" viewBox="0 0 5 3"><path d="M0.3 2.7 L2.5 0.5 L4.7 2.7" stroke="#ddd" stroke-width="0.7" fill="none"/></svg>
<svg style="left:713.5px;top:437.5px" width="6" height="7" viewBox="0 0 6 7"><rect x="0.5" y="1.5" width="5" height="4" stroke="#ddd" stroke-width="0.7" fill="none"/><path d="M1 0.3 H5 M3 5.5 V6.8" stroke="#ddd" stroke-width="0.7"/></svg>
<svg style="left:723px;top:439.2px" width="7" height="4" viewBox="0 0 7 4"><rect x="0.4" y="0.4" width="5.6" height="3.2" stroke="#ddd" stroke-width="0.7" fill="#ddd"/><path d="M6.3 1.3 V2.7" stroke="#ddd" stroke-width="0.8"/></svg>
<svg style="left:733.5px;top:437.5px" width="6" height="6" viewBox="0 0 6 6"><path d="M0.3 5.7 L5.7 0.3 V5.7 Z" stroke="#ddd" stroke-width="0.7" fill="none"/></svg>
<svg style="left:743.5px;top:437.5px" width="7" height="6" viewBox="0 0 7 6"><path d="M0.3 2 H1.8 L3.5 0.5 V5.5 L1.8 4 H0.3 Z" stroke="#ddd" stroke-width="0.6" fill="none"/><path d="M4.8 1.6 Q5.8 3 4.8 4.4 M5.8 0.8 Q7.2 3 5.8 5.2" stroke="#ddd" stroke-width="0.6" fill="none"/></svg>
<div class="t" style="left:755.6px;top:433.60px;height:10px;line-height:10px;font-size:4.8px;color:#eee;font-weight:normal;">4:09 PM</div>
<div class="t" style="left:755px;top:440.80px;height:10px;line-height:10px;font-size:4.8px;color:#eee;font-weight:normal;">8/6/2024</div>
<svg style="left:783px;top:438px" width="6.5" height="6" viewBox="0 0 6.5 6"><path d="M0.4 0.4 H6.1 V4.5 H3 L1.5 5.8 V4.5 H0.4 Z" stroke="#ddd" stroke-width="0.7" fill="none"/></svg>
</body></html>
